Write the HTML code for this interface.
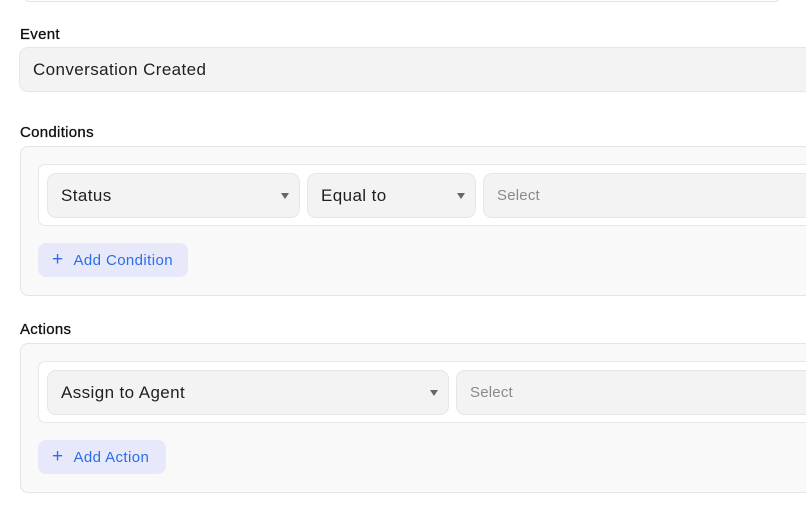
<!DOCTYPE html>
<html><head><style>
*{box-sizing:border-box;margin:0;padding:0}
body{width:806px;height:508px;overflow:hidden;background:#fff;font-family:"Liberation Sans",sans-serif;color:#1f1f1f;position:relative}
.a{position:absolute}
.lbl{font-size:15px;font-weight:400;color:#111;letter-spacing:0.3px;-webkit-text-stroke:0.3px #111}
.inp{background:#f3f3f3;border:1px solid #e6e6e6;border-radius:9px;font-size:17px;letter-spacing:0.4px;display:flex;align-items:center;padding-left:13px}
.panel{background:#f9f9fa;border:1px solid #e4e4e6;border-radius:8px}
.row{background:#fff;border:1px solid #e6e6e8;border-radius:7px}
.caret{position:absolute;right:10px;top:19px;width:0;height:0;border-left:4px solid transparent;border-right:4px solid transparent;border-top:6px solid #666}
.ph{color:#8a8a8e;font-size:15px;letter-spacing:0.2px}
.btn{background:#e8e8fb;border-radius:8px;color:#2a6ee8;font-size:15px;letter-spacing:0.4px;display:flex;align-items:center;padding-left:14px}
.btn span{font-size:19px;margin-right:10px;font-weight:300}
</style></head><body>
<div class="a" style="left:22px;top:-20px;width:760px;height:22px;border:1px solid #e4e4e4;border-radius:8px"></div>
<div class="a lbl" style="left:20px;top:26px">Event</div>
<div class="a inp" style="left:19px;top:47px;width:800px;height:45px">Conversation Created</div>
<div class="a lbl" style="left:20px;top:124px">Conditions</div>
<div class="a panel" style="left:20px;top:146px;width:800px;height:150px"></div>
<div class="a row" style="left:38px;top:164px;width:780px;height:62px"></div>
<div class="a inp" style="left:47px;top:173px;width:253px;height:45px">Status<i class="caret"></i></div>
<div class="a inp" style="left:307px;top:173px;width:169px;height:45px">Equal to<i class="caret"></i></div>
<div class="a inp ph" style="left:483px;top:173px;width:340px;height:45px">Select</div>
<div class="a btn" style="left:38px;top:243px;width:150px;height:34px"><span>+</span>Add Condition</div>
<div class="a lbl" style="left:20px;top:321px">Actions</div>
<div class="a panel" style="left:20px;top:343px;width:800px;height:150px"></div>
<div class="a row" style="left:38px;top:361px;width:780px;height:62px"></div>
<div class="a inp" style="left:47px;top:370px;width:402px;height:45px">Assign to Agent<i class="caret"></i></div>
<div class="a inp ph" style="left:456px;top:370px;width:370px;height:45px">Select</div>
<div class="a btn" style="left:38px;top:440px;width:128px;height:34px"><span>+</span>Add Action</div>
</body></html>
